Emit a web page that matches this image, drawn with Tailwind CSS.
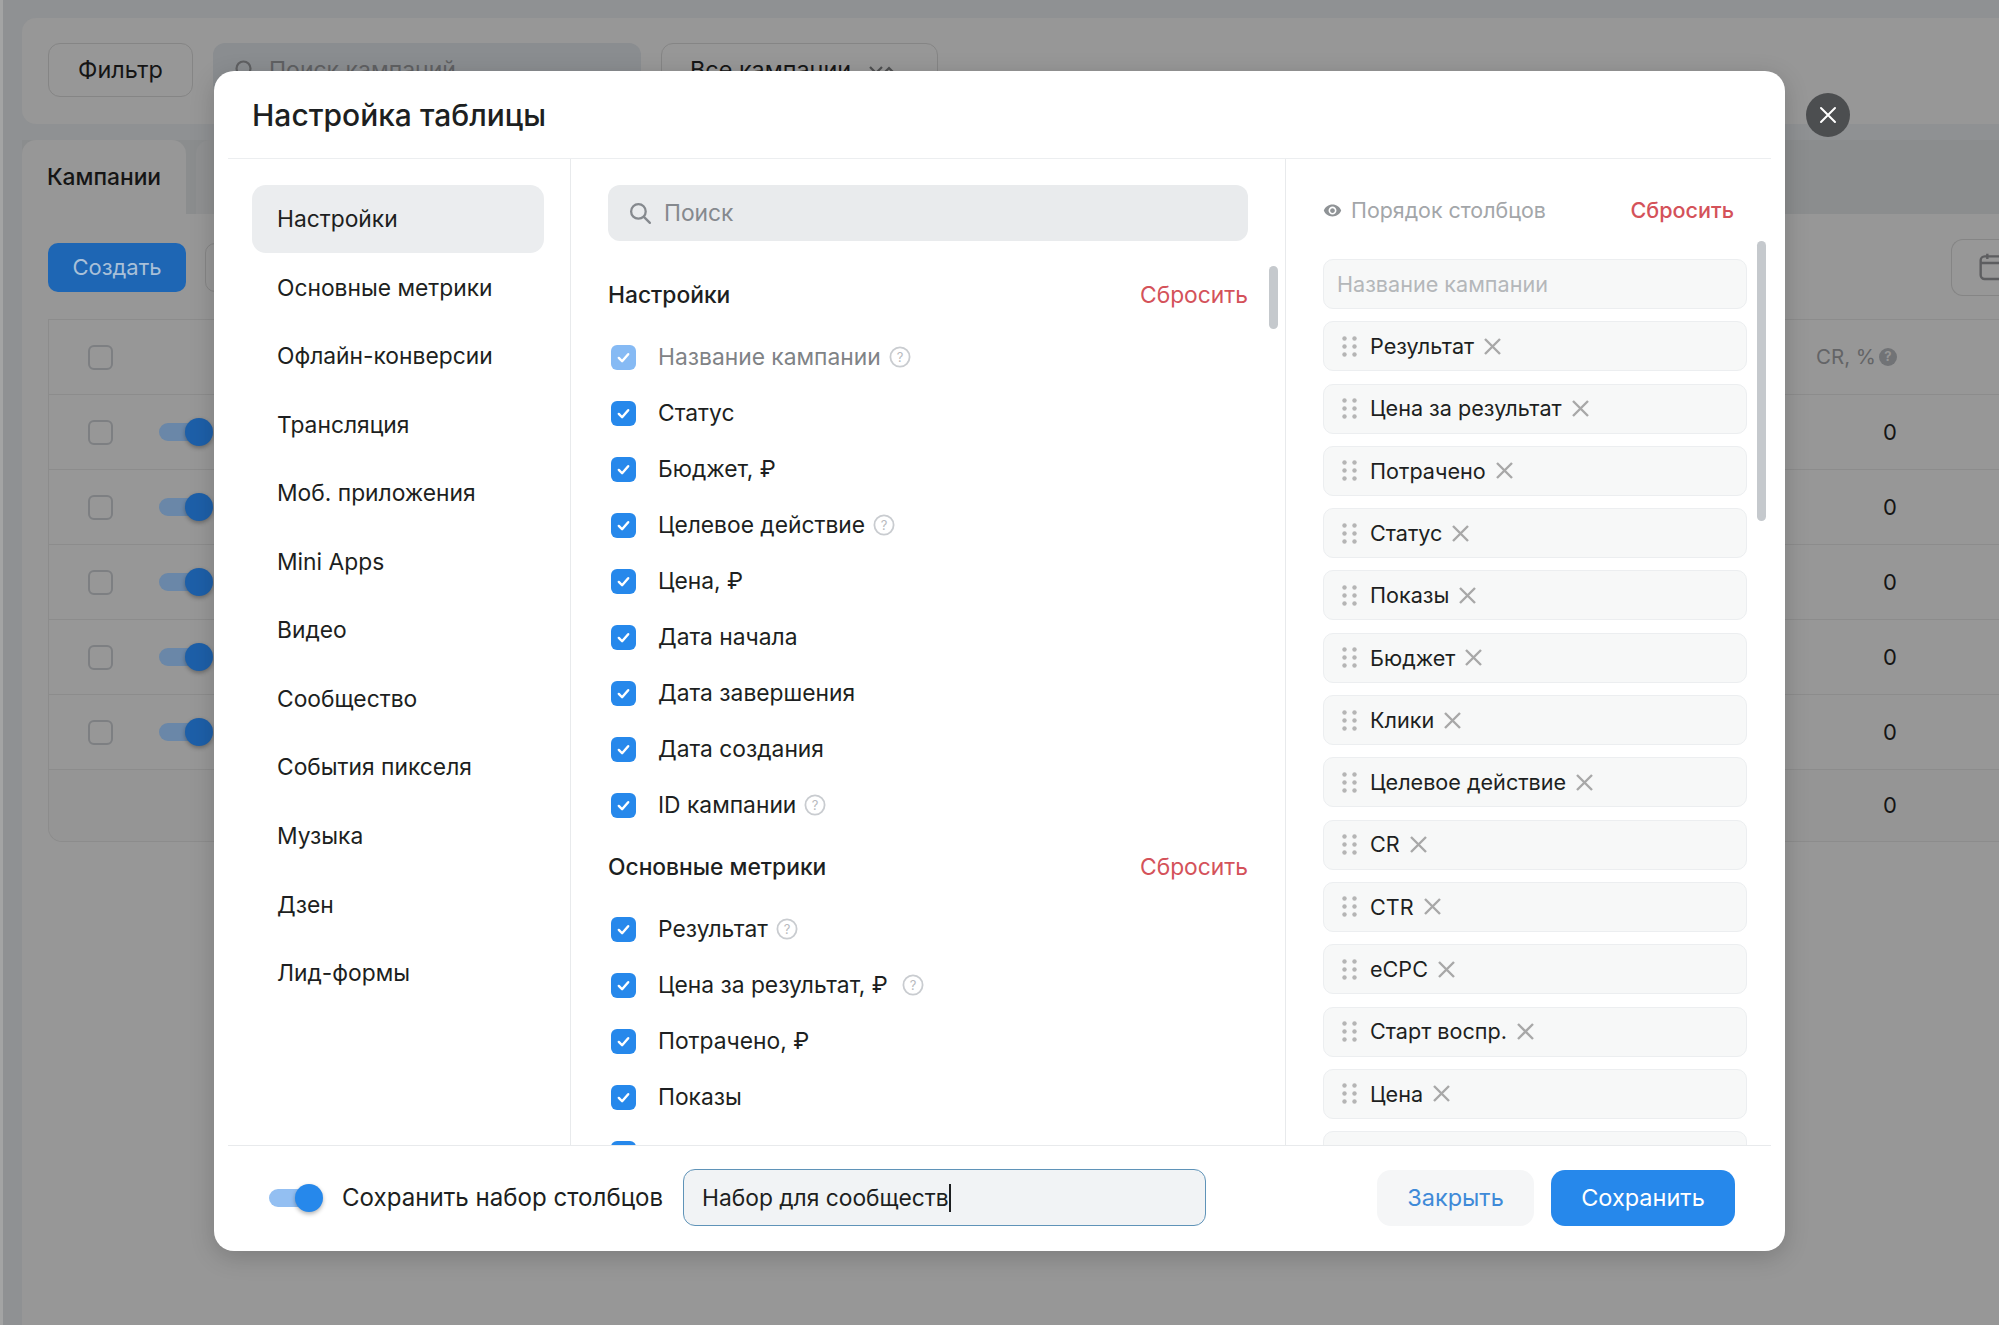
<!DOCTYPE html>
<html lang="ru">
  <head>
    <meta charset="UTF-8" />
    <title>Настройка таблицы</title>
    <script src="https://cdn.jsdelivr.net/npm/@tailwindcss/browser@4"></script>
  </head>
  <body class="font-['Inter','Noto_Sans',sans-serif] text-[#1d1f21]">
    <div class="relative h-screen w-screen overflow-hidden bg-[#a3a4a4] pl-[3px]">
      <!-- страница под затемнением -->
      <div class="flex h-full flex-col bg-[#8f9193] pl-[19px] pt-[18px]">
        <div class="flex h-[106px] shrink-0 gap-[20px] rounded-l-[14px] bg-[#979797] pl-[26px] pt-[25px]">
          <div class="flex h-[54px] w-[145px] items-center justify-center rounded-[12px] border border-[#858585] text-[23.4px] text-[#151515]">Фильтр</div>
          <div class="flex h-[54px] w-[428px] items-center gap-[12px] rounded-[12px] bg-[#8a8d90] pl-[20px] text-[23px] text-[#5f6062]">
            <svg class="h-[24px] w-[24px]" viewBox="0 0 24 24" fill="none" stroke="#5f6062" stroke-width="2.2"><circle cx="10.5" cy="10.5" r="7"/><path d="m16 16 5 5"/></svg>
            Поиск кампаний
          </div>
          <div class="flex h-[54px] w-[277px] items-center gap-[18px] rounded-[12px] border border-[#858585] pl-[28px] text-[23.4px] text-[#151515]">Все кампании
            <svg class="h-[14px] w-[26px]" viewBox="0 0 26 14" fill="none" stroke="#4e4f50" stroke-width="2.2"><path d="m1 4 6 6 6-6M16 9l4-4 5 5"/></svg>
          </div>
        </div>
        <div class="mt-[16px] flex h-[74px] shrink-0 gap-[10px] bg-[#8b8d8e]">
          <div class="flex w-[164px] items-center justify-center rounded-t-[14px] bg-[#979797] text-[22.8px] font-medium text-[#151515]">Кампании</div>
          <div class="w-[40px] rounded-t-[14px] bg-[#8f9091]"></div>
        </div>
        <div class="flex min-h-0 flex-1 flex-col bg-[#979797] pl-[26px] pt-[28px]">
          <div class="flex h-[50px] shrink-0 items-center justify-between">
            <div class="flex gap-[19px]">
              <div class="flex h-[49px] w-[138px] items-center justify-center rounded-[10px] bg-[#1e66b4] text-[22px] text-[#a9c0d8]">Создать</div>
              <div class="h-[49px] w-[60px] rounded-[10px] border border-[#858585]"></div>
            </div>
            <div class="flex h-[57px] w-[48px] items-center overflow-hidden rounded-l-[12px] border border-r-0 border-[#858585] pl-[26px]">
              <svg class="h-[32px] w-[32px] shrink-0" viewBox="0 0 24 24" fill="none" stroke="#5d5e60" stroke-width="1.8"><rect x="2" y="4" width="22" height="17" rx="3"/><path d="M2 9h22M7 2v4"/></svg>
            </div>
          </div>
          <div class="mt-[27px] rounded-bl-[14px] border-b border-l border-t border-[#8c8c8c] text-[22px] text-[#151515]">
            <div class="flex h-[75px] items-center justify-between border-b border-[#8c8c8c] pl-[39px] pr-[102px]">
              <div class="h-[25px] w-[25px] rounded-[6px] border-2 border-[#7d7f82]"></div>
              <div class="flex items-center gap-[3px] text-[20.5px] text-[#636466]">CR, %
                <span class="flex h-[18px] w-[18px] items-center justify-center rounded-full bg-[#717376] text-[13px] font-bold text-[#979797]">?</span>
              </div>
            </div>
            <div class="flex h-[75px] items-center justify-between border-b border-[#8c8c8c] pl-[39px] pr-[102px]">
              <div class="flex items-center gap-[46px]">
                <div class="h-[25px] w-[25px] rounded-[6px] border-2 border-[#7d7f82]"></div>
                <div class="relative h-[28px] w-[54px]"><div class="absolute left-0 top-[5px] h-[18px] w-[40px] rounded-full bg-[#6a87a8]"></div><div class="absolute right-0 top-0 h-[28px] w-[28px] rounded-full bg-[#1d5fa8] shadow-[0_2px_4px_rgba(0,0,0,0.3)]"></div></div>
              </div>
              <div>0</div>
            </div>
            <div class="flex h-[75px] items-center justify-between border-b border-[#8c8c8c] pl-[39px] pr-[102px]">
              <div class="flex items-center gap-[46px]">
                <div class="h-[25px] w-[25px] rounded-[6px] border-2 border-[#7d7f82]"></div>
                <div class="relative h-[28px] w-[54px]"><div class="absolute left-0 top-[5px] h-[18px] w-[40px] rounded-full bg-[#6a87a8]"></div><div class="absolute right-0 top-0 h-[28px] w-[28px] rounded-full bg-[#1d5fa8] shadow-[0_2px_4px_rgba(0,0,0,0.3)]"></div></div>
              </div>
              <div>0</div>
            </div>
            <div class="flex h-[75px] items-center justify-between border-b border-[#8c8c8c] pl-[39px] pr-[102px]">
              <div class="flex items-center gap-[46px]">
                <div class="h-[25px] w-[25px] rounded-[6px] border-2 border-[#7d7f82]"></div>
                <div class="relative h-[28px] w-[54px]"><div class="absolute left-0 top-[5px] h-[18px] w-[40px] rounded-full bg-[#6a87a8]"></div><div class="absolute right-0 top-0 h-[28px] w-[28px] rounded-full bg-[#1d5fa8] shadow-[0_2px_4px_rgba(0,0,0,0.3)]"></div></div>
              </div>
              <div>0</div>
            </div>
            <div class="flex h-[75px] items-center justify-between border-b border-[#8c8c8c] pl-[39px] pr-[102px]">
              <div class="flex items-center gap-[46px]">
                <div class="h-[25px] w-[25px] rounded-[6px] border-2 border-[#7d7f82]"></div>
                <div class="relative h-[28px] w-[54px]"><div class="absolute left-0 top-[5px] h-[18px] w-[40px] rounded-full bg-[#6a87a8]"></div><div class="absolute right-0 top-0 h-[28px] w-[28px] rounded-full bg-[#1d5fa8] shadow-[0_2px_4px_rgba(0,0,0,0.3)]"></div></div>
              </div>
              <div>0</div>
            </div>
            <div class="flex h-[75px] items-center justify-between border-b border-[#8c8c8c] pl-[39px] pr-[102px]">
              <div class="flex items-center gap-[46px]">
                <div class="h-[25px] w-[25px] rounded-[6px] border-2 border-[#7d7f82]"></div>
                <div class="relative h-[28px] w-[54px]"><div class="absolute left-0 top-[5px] h-[18px] w-[40px] rounded-full bg-[#6a87a8]"></div><div class="absolute right-0 top-0 h-[28px] w-[28px] rounded-full bg-[#1d5fa8] shadow-[0_2px_4px_rgba(0,0,0,0.3)]"></div></div>
              </div>
              <div>0</div>
            </div>
            <div class="flex h-[71px] items-center justify-end rounded-bl-[14px] bg-[#959595] pr-[102px]">0</div>
          </div>
        </div>
      </div>

      <!-- кнопка закрытия -->
      <div class="absolute left-[1806px] top-[93px] flex h-[44px] w-[44px] items-center justify-center rounded-full bg-[#4c4e50]">
        <svg class="h-[18px] w-[18px]" viewBox="0 0 18 18" fill="none" stroke="#fff" stroke-width="2" stroke-linecap="round"><path d="M2 2l14 14M16 2 2 16"/></svg>
      </div>

      <!-- модальное окно -->
      <div class="absolute left-[214px] top-[71px] flex h-[1180px] w-[1571px] flex-col rounded-[20px] bg-white shadow-[0_6px_24px_rgba(0,0,0,0.18)]">
        <div class="mx-[14px] flex h-[88px] shrink-0 items-center border-b border-[#eceef0] pl-[24px] pt-[2px] text-[30px] font-medium">Настройка таблицы</div>

        <div class="mx-[14px] flex min-h-0 flex-1">
          <!-- разделы -->
          <div class="w-[343px] shrink-0 border-r border-[#e8eaec] pl-[24px] pr-[26px] pt-[26px] text-[22.8px]">
            <div class="flex h-[68px] items-center rounded-[14px] bg-[#ebedef] pl-[25px] pt-[1px]">Настройки</div>
            <div class="flex h-[68.6px] items-center pl-[25px] pt-[1px]">Основные метрики</div>
            <div class="flex h-[68.6px] items-center pl-[25px] pt-[1px]">Офлайн-конверсии</div>
            <div class="flex h-[68.6px] items-center pl-[25px] pt-[1px]">Трансляция</div>
            <div class="flex h-[68.6px] items-center pl-[25px] pt-[1px]">Моб. приложения</div>
            <div class="flex h-[68.6px] items-center pl-[25px]">Mini Apps</div>
            <div class="flex h-[68.6px] items-center pl-[25px]">Видео</div>
            <div class="flex h-[68.6px] items-center pl-[25px]">Сообщество</div>
            <div class="flex h-[68.6px] items-center pl-[25px]">События пикселя</div>
            <div class="flex h-[68.6px] items-center pl-[25px]">Музыка</div>
            <div class="flex h-[68.6px] items-center pl-[25px]">Дзен</div>
            <div class="flex h-[68.6px] items-center pl-[25px]">Лид-формы</div>
          </div>

          <!-- столбцы -->
          <div class="relative w-[715px] shrink-0 overflow-hidden border-r border-[#e8eaec] pl-[37px] text-[22.8px]">
            <div class="absolute left-[698px] top-[107px] h-[63px] w-[9px] rounded-full bg-[#c5c9cd]"></div>
            <div class="mt-[26px] flex h-[56px] w-[640px] items-center gap-[11px] rounded-[12px] bg-[#e9ebed] pl-[20px] text-[#85898e]">
              <svg class="h-[25px] w-[25px]" viewBox="0 0 24 24" fill="none" stroke="#85898e" stroke-width="2.2" stroke-linecap="round"><circle cx="10" cy="10" r="7"/><path d="m15.5 15.5 5.5 5.5"/></svg>
              Поиск
            </div>

            <div class="mt-[34px] flex h-[40px] w-[640px] items-center justify-between">
              <span class="font-medium">Настройки</span>
              <span class="text-[#d4525a]">Сбросить</span>
            </div>
            <div class="mt-[14px]">
              <div class="flex h-[56px] items-center gap-[22px] pl-[3px]">
                <div class="flex h-[25px] w-[25px] items-center justify-center rounded-[6px] bg-[#86baf4]"><svg class="h-[15px] w-[15px]" viewBox="0 0 16 16" fill="none" stroke="#fff" stroke-width="2.6" stroke-linecap="round" stroke-linejoin="round"><path d="m3 8.5 3.5 3.5L13 4.5"/></svg></div>
                <span class="flex items-center gap-[8px] text-[#7f8386]">Название кампании
                  <svg class="h-[22px] w-[22px]" viewBox="0 0 22 22"><circle cx="11" cy="11" r="9.6" fill="none" stroke="#c9ccd0" stroke-width="1.8"/><text x="11" y="15.5" text-anchor="middle" font-size="13" fill="#b8bbbe">?</text></svg>
                </span>
              </div>
              <div class="flex h-[56px] items-center gap-[22px] pl-[3px]">
                <div class="flex h-[25px] w-[25px] items-center justify-center rounded-[6px] bg-[#2688eb]"><svg class="h-[15px] w-[15px]" viewBox="0 0 16 16" fill="none" stroke="#fff" stroke-width="2.6" stroke-linecap="round" stroke-linejoin="round"><path d="m3 8.5 3.5 3.5L13 4.5"/></svg></div>
                <span>Статус</span>
              </div>
              <div class="flex h-[56px] items-center gap-[22px] pl-[3px]">
                <div class="flex h-[25px] w-[25px] items-center justify-center rounded-[6px] bg-[#2688eb]"><svg class="h-[15px] w-[15px]" viewBox="0 0 16 16" fill="none" stroke="#fff" stroke-width="2.6" stroke-linecap="round" stroke-linejoin="round"><path d="m3 8.5 3.5 3.5L13 4.5"/></svg></div>
                <span>Бюджет, ₽</span>
              </div>
              <div class="flex h-[56px] items-center gap-[22px] pl-[3px]">
                <div class="flex h-[25px] w-[25px] items-center justify-center rounded-[6px] bg-[#2688eb]"><svg class="h-[15px] w-[15px]" viewBox="0 0 16 16" fill="none" stroke="#fff" stroke-width="2.6" stroke-linecap="round" stroke-linejoin="round"><path d="m3 8.5 3.5 3.5L13 4.5"/></svg></div>
                <span class="flex items-center gap-[8px]">Целевое действие
                  <svg class="h-[22px] w-[22px]" viewBox="0 0 22 22"><circle cx="11" cy="11" r="9.6" fill="none" stroke="#c9ccd0" stroke-width="1.8"/><text x="11" y="15.5" text-anchor="middle" font-size="13" fill="#b8bbbe">?</text></svg>
                </span>
              </div>
              <div class="flex h-[56px] items-center gap-[22px] pl-[3px]">
                <div class="flex h-[25px] w-[25px] items-center justify-center rounded-[6px] bg-[#2688eb]"><svg class="h-[15px] w-[15px]" viewBox="0 0 16 16" fill="none" stroke="#fff" stroke-width="2.6" stroke-linecap="round" stroke-linejoin="round"><path d="m3 8.5 3.5 3.5L13 4.5"/></svg></div>
                <span>Цена, ₽</span>
              </div>
              <div class="flex h-[56px] items-center gap-[22px] pl-[3px]">
                <div class="flex h-[25px] w-[25px] items-center justify-center rounded-[6px] bg-[#2688eb]"><svg class="h-[15px] w-[15px]" viewBox="0 0 16 16" fill="none" stroke="#fff" stroke-width="2.6" stroke-linecap="round" stroke-linejoin="round"><path d="m3 8.5 3.5 3.5L13 4.5"/></svg></div>
                <span>Дата начала</span>
              </div>
              <div class="flex h-[56px] items-center gap-[22px] pl-[3px]">
                <div class="flex h-[25px] w-[25px] items-center justify-center rounded-[6px] bg-[#2688eb]"><svg class="h-[15px] w-[15px]" viewBox="0 0 16 16" fill="none" stroke="#fff" stroke-width="2.6" stroke-linecap="round" stroke-linejoin="round"><path d="m3 8.5 3.5 3.5L13 4.5"/></svg></div>
                <span>Дата завершения</span>
              </div>
              <div class="flex h-[56px] items-center gap-[22px] pl-[3px]">
                <div class="flex h-[25px] w-[25px] items-center justify-center rounded-[6px] bg-[#2688eb]"><svg class="h-[15px] w-[15px]" viewBox="0 0 16 16" fill="none" stroke="#fff" stroke-width="2.6" stroke-linecap="round" stroke-linejoin="round"><path d="m3 8.5 3.5 3.5L13 4.5"/></svg></div>
                <span>Дата создания</span>
              </div>
              <div class="flex h-[56px] items-center gap-[22px] pl-[3px]">
                <div class="flex h-[25px] w-[25px] items-center justify-center rounded-[6px] bg-[#2688eb]"><svg class="h-[15px] w-[15px]" viewBox="0 0 16 16" fill="none" stroke="#fff" stroke-width="2.6" stroke-linecap="round" stroke-linejoin="round"><path d="m3 8.5 3.5 3.5L13 4.5"/></svg></div>
                <span class="flex items-center gap-[8px]">ID кампании
                  <svg class="h-[22px] w-[22px]" viewBox="0 0 22 22"><circle cx="11" cy="11" r="9.6" fill="none" stroke="#c9ccd0" stroke-width="1.8"/><text x="11" y="15.5" text-anchor="middle" font-size="13" fill="#b8bbbe">?</text></svg>
                </span>
              </div>
            </div>

            <div class="mt-[14px] flex h-[40px] w-[640px] items-center justify-between">
              <span class="font-medium">Основные метрики</span>
              <span class="text-[#d4525a]">Сбросить</span>
            </div>
            <div class="mt-[14px]">
              <div class="flex h-[56px] items-center gap-[22px] pl-[3px]">
                <div class="flex h-[25px] w-[25px] items-center justify-center rounded-[6px] bg-[#2688eb]"><svg class="h-[15px] w-[15px]" viewBox="0 0 16 16" fill="none" stroke="#fff" stroke-width="2.6" stroke-linecap="round" stroke-linejoin="round"><path d="m3 8.5 3.5 3.5L13 4.5"/></svg></div>
                <span class="flex items-center gap-[8px]">Результат
                  <svg class="h-[22px] w-[22px]" viewBox="0 0 22 22"><circle cx="11" cy="11" r="9.6" fill="none" stroke="#c9ccd0" stroke-width="1.8"/><text x="11" y="15.5" text-anchor="middle" font-size="13" fill="#b8bbbe">?</text></svg>
                </span>
              </div>
              <div class="flex h-[56px] items-center gap-[22px] pl-[3px]">
                <div class="flex h-[25px] w-[25px] items-center justify-center rounded-[6px] bg-[#2688eb]"><svg class="h-[15px] w-[15px]" viewBox="0 0 16 16" fill="none" stroke="#fff" stroke-width="2.6" stroke-linecap="round" stroke-linejoin="round"><path d="m3 8.5 3.5 3.5L13 4.5"/></svg></div>
                <span class="flex items-center gap-[14px]">Цена за результат, ₽
                  <svg class="h-[22px] w-[22px]" viewBox="0 0 22 22"><circle cx="11" cy="11" r="9.6" fill="none" stroke="#c9ccd0" stroke-width="1.8"/><text x="11" y="15.5" text-anchor="middle" font-size="13" fill="#b8bbbe">?</text></svg>
                </span>
              </div>
              <div class="flex h-[56px] items-center gap-[22px] pl-[3px]">
                <div class="flex h-[25px] w-[25px] items-center justify-center rounded-[6px] bg-[#2688eb]"><svg class="h-[15px] w-[15px]" viewBox="0 0 16 16" fill="none" stroke="#fff" stroke-width="2.6" stroke-linecap="round" stroke-linejoin="round"><path d="m3 8.5 3.5 3.5L13 4.5"/></svg></div>
                <span>Потрачено, ₽</span>
              </div>
              <div class="flex h-[56px] items-center gap-[22px] pl-[3px]">
                <div class="flex h-[25px] w-[25px] items-center justify-center rounded-[6px] bg-[#2688eb]"><svg class="h-[15px] w-[15px]" viewBox="0 0 16 16" fill="none" stroke="#fff" stroke-width="2.6" stroke-linecap="round" stroke-linejoin="round"><path d="m3 8.5 3.5 3.5L13 4.5"/></svg></div>
                <span>Показы</span>
              </div>
              <div class="flex h-[56px] items-center gap-[22px] pl-[3px]">
                <div class="flex h-[25px] w-[25px] items-center justify-center rounded-[6px] bg-[#2688eb]"></div>
              </div>
            </div>
          </div>

          <!-- порядок -->
          <div class="relative min-w-0 flex-1 overflow-hidden pl-[37px] text-[21.6px]">
            <div class="absolute left-[471px] top-[82px] h-[280px] w-[9px] rounded-full bg-[#c5c9cd]"></div>
            <div class="mt-[31px] flex h-[40px] w-[411px] items-center justify-between">
              <span class="flex items-center gap-[9px] pt-[1px] text-[21.4px] text-[#a3a6a9]">
                <svg class="h-[19px] w-[19px]" viewBox="0 0 24 24" fill="#8f9396"><path d="M12 4.5C7 4.5 2.73 7.61 1 12c1.73 4.39 6 7.5 11 7.5s9.27-3.11 11-7.5c-1.73-4.39-6-7.5-11-7.5zM12 17c-2.76 0-5-2.24-5-5s2.24-5 5-5 5 2.24 5 5-2.24 5-5 5zm0-8c-1.66 0-3 1.34-3 3s1.34 3 3 3 3-1.34 3-3-1.34-3-3-3z"/></svg>
                Порядок столбцов
              </span>
              <span class="font-medium text-[#d4525a]">Сбросить</span>
            </div>
            <div class="mt-[29px] flex w-[424px] flex-col gap-[12.3px]">
              <div class="flex h-[50px] shrink-0 items-center rounded-[10px] border border-[#eceef0] bg-[#f7f8f8] pl-[13px] pt-[1px] text-[#b4b7ba]">Название кампании</div>
              <div class="flex h-[50px] shrink-0 items-center gap-[13px] rounded-[10px] border border-[#eceef0] bg-[#f7f8f8] pl-[18px]">
                <svg class="h-[21px] w-[15px]" viewBox="0 0 15 21" fill="#b5b5b5"><circle cx="2.5" cy="2.5" r="2.2"/><circle cx="12.5" cy="2.5" r="2.2"/><circle cx="2.5" cy="10.5" r="2.2"/><circle cx="12.5" cy="10.5" r="2.2"/><circle cx="2.5" cy="18.5" r="2.2"/><circle cx="12.5" cy="18.5" r="2.2"/></svg>
                <span>Результат</span>
                <svg class="-ml-[3px] h-[17px] w-[17px]" viewBox="0 0 17 17" fill="none" stroke="#a8a8a8" stroke-width="2.4"><path d="m1 1 15 15M16 1 1 16"/></svg>
              </div>
              <div class="flex h-[50px] shrink-0 items-center gap-[13px] rounded-[10px] border border-[#eceef0] bg-[#f7f8f8] pl-[18px]">
                <svg class="h-[21px] w-[15px]" viewBox="0 0 15 21" fill="#b5b5b5"><circle cx="2.5" cy="2.5" r="2.2"/><circle cx="12.5" cy="2.5" r="2.2"/><circle cx="2.5" cy="10.5" r="2.2"/><circle cx="12.5" cy="10.5" r="2.2"/><circle cx="2.5" cy="18.5" r="2.2"/><circle cx="12.5" cy="18.5" r="2.2"/></svg>
                <span>Цена за результат</span>
                <svg class="-ml-[3px] h-[17px] w-[17px]" viewBox="0 0 17 17" fill="none" stroke="#a8a8a8" stroke-width="2.4"><path d="m1 1 15 15M16 1 1 16"/></svg>
              </div>
              <div class="flex h-[50px] shrink-0 items-center gap-[13px] rounded-[10px] border border-[#eceef0] bg-[#f7f8f8] pl-[18px]">
                <svg class="h-[21px] w-[15px]" viewBox="0 0 15 21" fill="#b5b5b5"><circle cx="2.5" cy="2.5" r="2.2"/><circle cx="12.5" cy="2.5" r="2.2"/><circle cx="2.5" cy="10.5" r="2.2"/><circle cx="12.5" cy="10.5" r="2.2"/><circle cx="2.5" cy="18.5" r="2.2"/><circle cx="12.5" cy="18.5" r="2.2"/></svg>
                <span>Потрачено</span>
                <svg class="-ml-[3px] h-[17px] w-[17px]" viewBox="0 0 17 17" fill="none" stroke="#a8a8a8" stroke-width="2.4"><path d="m1 1 15 15M16 1 1 16"/></svg>
              </div>
              <div class="flex h-[50px] shrink-0 items-center gap-[13px] rounded-[10px] border border-[#eceef0] bg-[#f7f8f8] pl-[18px]">
                <svg class="h-[21px] w-[15px]" viewBox="0 0 15 21" fill="#b5b5b5"><circle cx="2.5" cy="2.5" r="2.2"/><circle cx="12.5" cy="2.5" r="2.2"/><circle cx="2.5" cy="10.5" r="2.2"/><circle cx="12.5" cy="10.5" r="2.2"/><circle cx="2.5" cy="18.5" r="2.2"/><circle cx="12.5" cy="18.5" r="2.2"/></svg>
                <span>Статус</span>
                <svg class="-ml-[3px] h-[17px] w-[17px]" viewBox="0 0 17 17" fill="none" stroke="#a8a8a8" stroke-width="2.4"><path d="m1 1 15 15M16 1 1 16"/></svg>
              </div>
              <div class="flex h-[50px] shrink-0 items-center gap-[13px] rounded-[10px] border border-[#eceef0] bg-[#f7f8f8] pl-[18px]">
                <svg class="h-[21px] w-[15px]" viewBox="0 0 15 21" fill="#b5b5b5"><circle cx="2.5" cy="2.5" r="2.2"/><circle cx="12.5" cy="2.5" r="2.2"/><circle cx="2.5" cy="10.5" r="2.2"/><circle cx="12.5" cy="10.5" r="2.2"/><circle cx="2.5" cy="18.5" r="2.2"/><circle cx="12.5" cy="18.5" r="2.2"/></svg>
                <span>Показы</span>
                <svg class="-ml-[3px] h-[17px] w-[17px]" viewBox="0 0 17 17" fill="none" stroke="#a8a8a8" stroke-width="2.4"><path d="m1 1 15 15M16 1 1 16"/></svg>
              </div>
              <div class="flex h-[50px] shrink-0 items-center gap-[13px] rounded-[10px] border border-[#eceef0] bg-[#f7f8f8] pl-[18px]">
                <svg class="h-[21px] w-[15px]" viewBox="0 0 15 21" fill="#b5b5b5"><circle cx="2.5" cy="2.5" r="2.2"/><circle cx="12.5" cy="2.5" r="2.2"/><circle cx="2.5" cy="10.5" r="2.2"/><circle cx="12.5" cy="10.5" r="2.2"/><circle cx="2.5" cy="18.5" r="2.2"/><circle cx="12.5" cy="18.5" r="2.2"/></svg>
                <span>Бюджет</span>
                <svg class="-ml-[3px] h-[17px] w-[17px]" viewBox="0 0 17 17" fill="none" stroke="#a8a8a8" stroke-width="2.4"><path d="m1 1 15 15M16 1 1 16"/></svg>
              </div>
              <div class="flex h-[50px] shrink-0 items-center gap-[13px] rounded-[10px] border border-[#eceef0] bg-[#f7f8f8] pl-[18px]">
                <svg class="h-[21px] w-[15px]" viewBox="0 0 15 21" fill="#b5b5b5"><circle cx="2.5" cy="2.5" r="2.2"/><circle cx="12.5" cy="2.5" r="2.2"/><circle cx="2.5" cy="10.5" r="2.2"/><circle cx="12.5" cy="10.5" r="2.2"/><circle cx="2.5" cy="18.5" r="2.2"/><circle cx="12.5" cy="18.5" r="2.2"/></svg>
                <span>Клики</span>
                <svg class="-ml-[3px] h-[17px] w-[17px]" viewBox="0 0 17 17" fill="none" stroke="#a8a8a8" stroke-width="2.4"><path d="m1 1 15 15M16 1 1 16"/></svg>
              </div>
              <div class="flex h-[50px] shrink-0 items-center gap-[13px] rounded-[10px] border border-[#eceef0] bg-[#f7f8f8] pl-[18px]">
                <svg class="h-[21px] w-[15px]" viewBox="0 0 15 21" fill="#b5b5b5"><circle cx="2.5" cy="2.5" r="2.2"/><circle cx="12.5" cy="2.5" r="2.2"/><circle cx="2.5" cy="10.5" r="2.2"/><circle cx="12.5" cy="10.5" r="2.2"/><circle cx="2.5" cy="18.5" r="2.2"/><circle cx="12.5" cy="18.5" r="2.2"/></svg>
                <span>Целевое действие</span>
                <svg class="-ml-[3px] h-[17px] w-[17px]" viewBox="0 0 17 17" fill="none" stroke="#a8a8a8" stroke-width="2.4"><path d="m1 1 15 15M16 1 1 16"/></svg>
              </div>
              <div class="flex h-[50px] shrink-0 items-center gap-[13px] rounded-[10px] border border-[#eceef0] bg-[#f7f8f8] pl-[18px]">
                <svg class="h-[21px] w-[15px]" viewBox="0 0 15 21" fill="#b5b5b5"><circle cx="2.5" cy="2.5" r="2.2"/><circle cx="12.5" cy="2.5" r="2.2"/><circle cx="2.5" cy="10.5" r="2.2"/><circle cx="12.5" cy="10.5" r="2.2"/><circle cx="2.5" cy="18.5" r="2.2"/><circle cx="12.5" cy="18.5" r="2.2"/></svg>
                <span>CR</span>
                <svg class="-ml-[3px] h-[17px] w-[17px]" viewBox="0 0 17 17" fill="none" stroke="#a8a8a8" stroke-width="2.4"><path d="m1 1 15 15M16 1 1 16"/></svg>
              </div>
              <div class="flex h-[50px] shrink-0 items-center gap-[13px] rounded-[10px] border border-[#eceef0] bg-[#f7f8f8] pl-[18px]">
                <svg class="h-[21px] w-[15px]" viewBox="0 0 15 21" fill="#b5b5b5"><circle cx="2.5" cy="2.5" r="2.2"/><circle cx="12.5" cy="2.5" r="2.2"/><circle cx="2.5" cy="10.5" r="2.2"/><circle cx="12.5" cy="10.5" r="2.2"/><circle cx="2.5" cy="18.5" r="2.2"/><circle cx="12.5" cy="18.5" r="2.2"/></svg>
                <span>CTR</span>
                <svg class="-ml-[3px] h-[17px] w-[17px]" viewBox="0 0 17 17" fill="none" stroke="#a8a8a8" stroke-width="2.4"><path d="m1 1 15 15M16 1 1 16"/></svg>
              </div>
              <div class="flex h-[50px] shrink-0 items-center gap-[13px] rounded-[10px] border border-[#eceef0] bg-[#f7f8f8] pl-[18px]">
                <svg class="h-[21px] w-[15px]" viewBox="0 0 15 21" fill="#b5b5b5"><circle cx="2.5" cy="2.5" r="2.2"/><circle cx="12.5" cy="2.5" r="2.2"/><circle cx="2.5" cy="10.5" r="2.2"/><circle cx="12.5" cy="10.5" r="2.2"/><circle cx="2.5" cy="18.5" r="2.2"/><circle cx="12.5" cy="18.5" r="2.2"/></svg>
                <span>eCPC</span>
                <svg class="-ml-[3px] h-[17px] w-[17px]" viewBox="0 0 17 17" fill="none" stroke="#a8a8a8" stroke-width="2.4"><path d="m1 1 15 15M16 1 1 16"/></svg>
              </div>
              <div class="flex h-[50px] shrink-0 items-center gap-[13px] rounded-[10px] border border-[#eceef0] bg-[#f7f8f8] pl-[18px]">
                <svg class="h-[21px] w-[15px]" viewBox="0 0 15 21" fill="#b5b5b5"><circle cx="2.5" cy="2.5" r="2.2"/><circle cx="12.5" cy="2.5" r="2.2"/><circle cx="2.5" cy="10.5" r="2.2"/><circle cx="12.5" cy="10.5" r="2.2"/><circle cx="2.5" cy="18.5" r="2.2"/><circle cx="12.5" cy="18.5" r="2.2"/></svg>
                <span>Старт воспр.</span>
                <svg class="-ml-[3px] h-[17px] w-[17px]" viewBox="0 0 17 17" fill="none" stroke="#a8a8a8" stroke-width="2.4"><path d="m1 1 15 15M16 1 1 16"/></svg>
              </div>
              <div class="flex h-[50px] shrink-0 items-center gap-[13px] rounded-[10px] border border-[#eceef0] bg-[#f7f8f8] pl-[18px]">
                <svg class="h-[21px] w-[15px]" viewBox="0 0 15 21" fill="#b5b5b5"><circle cx="2.5" cy="2.5" r="2.2"/><circle cx="12.5" cy="2.5" r="2.2"/><circle cx="2.5" cy="10.5" r="2.2"/><circle cx="12.5" cy="10.5" r="2.2"/><circle cx="2.5" cy="18.5" r="2.2"/><circle cx="12.5" cy="18.5" r="2.2"/></svg>
                <span>Цена</span>
                <svg class="-ml-[3px] h-[17px] w-[17px]" viewBox="0 0 17 17" fill="none" stroke="#a8a8a8" stroke-width="2.4"><path d="m1 1 15 15M16 1 1 16"/></svg>
              </div>
              <div class="h-[50px] shrink-0 rounded-[10px] border border-[#eceef0] bg-[#f7f8f8]"></div>
            </div>
          </div>
        </div>

        <div class="mx-[14px] flex h-[106px] shrink-0 items-center border-t border-[#e8eaec] pb-[2px] pl-[41px] text-[23px]">
          <div class="relative mt-[1px] h-[28px] w-[54px] shrink-0">
            <div class="absolute left-0 top-[5px] h-[18px] w-[40px] rounded-full bg-[#93bff2]"></div>
            <div class="absolute right-0 top-0 h-[28px] w-[28px] rounded-full bg-[#2688eb] shadow-[0_2px_4px_rgba(0,0,0,0.3)]"></div>
          </div>
          <span class="ml-[19px] w-[322px] shrink-0 whitespace-nowrap pt-[2px] text-[24.1px]">Сохранить набор столбцов</span>
          <div class="ml-[19px] flex h-[57px] w-[523px] shrink-0 items-center rounded-[12px] border-[1.5px] border-[#5f93b8] bg-[#f1f3f5] pl-[18px] pt-[1px] text-[22.8px]">Набор для сообществ<span class="h-[28px] w-[2px] bg-[#1d1f21]"></span></div>
          <div class="ml-[171px] flex h-[56px] w-[157px] shrink-0 items-center justify-center rounded-[14px] bg-[#f5f6f7] text-[23.5px] text-[#3f8ad8]">Закрыть</div>
          <div class="ml-[17px] flex h-[56px] w-[184px] shrink-0 items-center justify-center rounded-[14px] bg-[#2688eb] text-[23.5px] text-white">Сохранить</div>
        </div>
      </div>
    </div>
  </body>
</html>
